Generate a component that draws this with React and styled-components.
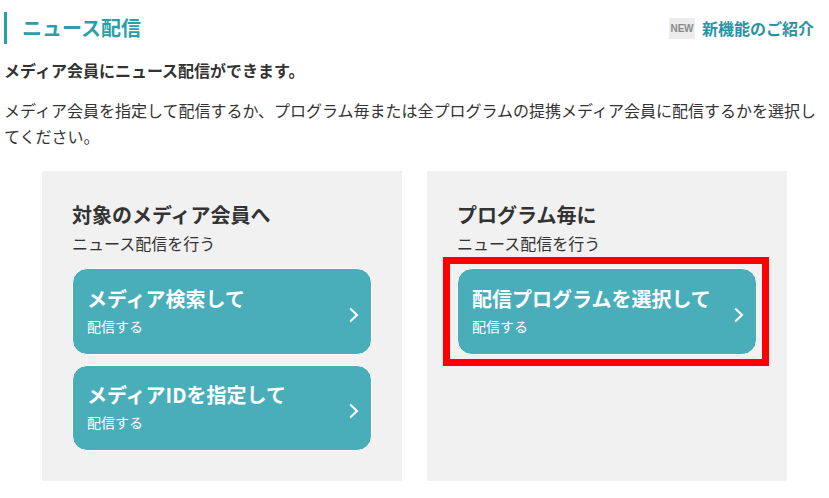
import React from "react";
import styled, { createGlobalStyle } from "styled-components";

const Global = createGlobalStyle`
  html, body { margin: 0; padding: 0; background: #fff; overflow: hidden; }
  body { font-family: "Noto Sans CJK JP", "Noto Sans", sans-serif; color: #333; }
`;
const Page = styled.div`
  width: 829px; height: 498px; box-sizing: border-box; padding: 12px 15px 0 4px; overflow: hidden;
`;
const Header = styled.header`
  display: flex; justify-content: space-between; align-items: center; height: 32px;
`;
const Title = styled.h1`
  margin: 0; border-left: 3px solid #2a9fab; padding-left: 15px; font-size: 20px; line-height: 32px;
  font-weight: 700; color: #2a9fab;
`;
const NewLink = styled.a`
  display: flex; align-items: center; gap: 7px; color: #2a93a3; font-size: 16px; font-weight: 700; line-height: 20px;
`;
const NewBadge = styled.span`
  width: 26px; height: 21px; background: #ececec; color: #8a8a8a; font: 700 10px/21px "Liberation Sans", sans-serif;
  text-align: center; letter-spacing: -0.2px;
`;
const Lead = styled.p`
  margin: 14px 0 0; font-size: 16px; line-height: 24px; font-weight: 700; white-space: nowrap;
`;
const Body = styled.p`
  margin: 15px -15px 0 0; font-size: 16px; line-height: 26px;
`;
const Cards = styled.div`
  display: flex; gap: 25px; margin: 22px 0 0 38px;
`;
const Card = styled.section`
  position: relative; width: 360px; height: 310px; box-sizing: border-box; background: #f1f1f1; padding: 30px 30px 0 30px;
`;
const CardTitle = styled.h2`
  margin: 0; font-size: 20px; line-height: 28px; font-weight: 700; color: #333;
`;
const CardSub = styled.p`
  margin: 2px 0 0; font-size: 16px; line-height: 24px; color: #333;
`;
const Actions = styled.div`
  display: flex; flex-direction: column; gap: 10px; margin-top: 13px;
`;
const Action = styled.a`
  display: flex; align-items: center; justify-content: space-between; box-sizing: border-box; height: ${p => p.$h}px;
  padding: 0 12px 0 14px; background: #49aeba; border: 1px solid #fff; border-radius: 15px; color: #fff;
`;
const ActionText = styled.div`
  display: flex; flex-direction: column; padding-bottom: 4px;
`;
const ActionTitle = styled.strong`
  font-size: 20px; line-height: 30px; font-weight: 700;
`;
const ActionSub = styled.span`
  font-size: 14px; line-height: 20px; margin-top: 2px;
`;
const Highlight = styled.div`
  position: absolute; left: 16px; top: 86px; width: 326px; height: 109px; box-sizing: border-box; border: 7px solid #f00;
  pointer-events: none;
`;
const ChevronIcon = styled.svg`
  margin-top: 6px;
`;
const Chevron = () => (
  <ChevronIcon width="10" height="16" viewBox="0 0 10 16" fill="none" stroke="#fff" strokeWidth="2" aria-hidden="true">
    <path d="M1.2 1.5 8 8 1.2 14.5" />
  </ChevronIcon>
);
const Button = ({ title, h }) => (
  <Action $h={h}>
    <ActionText>
      <ActionTitle>{title}</ActionTitle>
      <ActionSub>配信する</ActionSub>
    </ActionText>
    <Chevron />
  </Action>
);

export default function App() {
  return (
    <Page>
      <Global />
      <Header>
        <Title>ニュース配信</Title>
        <NewLink><NewBadge>NEW</NewBadge>新機能のご紹介</NewLink>
      </Header>
      <Lead>メディア会員にニュース配信ができます。</Lead>
      <Body>メディア会員を指定して配信するか、プログラム毎または全プログラムの提携メディア会員に配信するかを選択してください。</Body>
      <Cards>
        <Card>
          <CardTitle>対象のメディア会員へ</CardTitle>
          <CardSub>ニュース配信を行う</CardSub>
          <Actions>
            <Button title="メディア検索して" h={87} />
            <Button title="メディアIDを指定して" h={86} />
          </Actions>
        </Card>
        <Card>
          <CardTitle>プログラム毎に</CardTitle>
          <CardSub>ニュース配信を行う</CardSub>
          <Actions>
            <Button title="配信プログラムを選択して" h={87} />
          </Actions>
          <Highlight />
        </Card>
      </Cards>
    </Page>
  );
}
